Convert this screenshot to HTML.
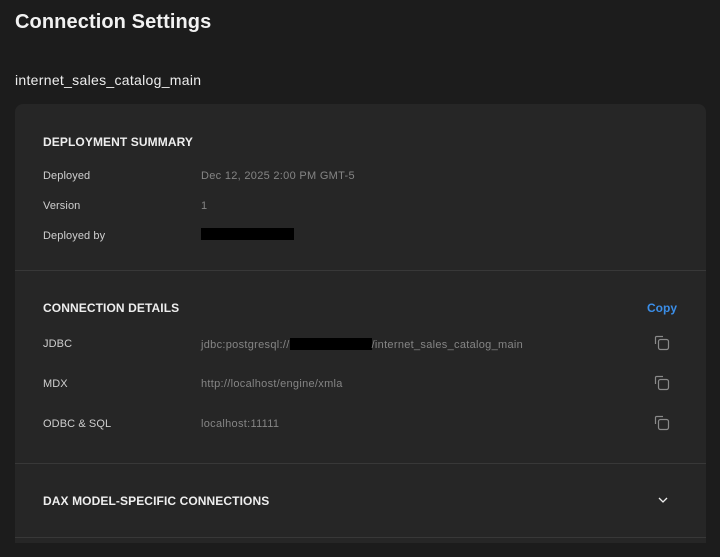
<!DOCTYPE html>
<html><head><style>
body{margin:0;background:#1c1c1c;width:720px;height:557px;overflow:hidden;font-family:"Liberation Sans",sans-serif;color:#ececec;position:relative}
.a{position:absolute;white-space:nowrap}
h1{position:absolute;left:15px;top:11px;margin:0;font-size:20px;font-weight:bold;color:#f2f2f2;letter-spacing:0.1px}
.card{position:absolute;left:15px;top:104px;width:691px;height:439px;background:#262626;border-radius:8px 8px 0 0}
.hd{font-size:12px;font-weight:bold;color:#eee;letter-spacing:0.1px}
.lb{font-size:11px;color:#cfcfcf;letter-spacing:0.1px}
.vl{font-size:11px;color:#858585;letter-spacing:0.3px}
.hr{position:absolute;left:15px;width:691px;height:1px;background:#383838}
.red{position:absolute;background:#000}
</style></head><body>
<h1>Connection Settings</h1>
<div class="a" style="left:15px;top:72px;font-size:14px;color:#eee;letter-spacing:0.3px">internet_sales_catalog_main</div>
<div class="card"></div>
<div class="a hd" style="left:43px;top:135px">DEPLOYMENT SUMMARY</div>
<div class="a lb" style="left:43px;top:170px">Deployed</div><div class="a vl" style="left:201px;top:170px">Dec 12, 2025 2:00 PM GMT-5</div>
<div class="a lb" style="left:43px;top:200px">Version</div><div class="a vl" style="left:201px;top:200px">1</div>
<div class="a lb" style="left:43px;top:230px">Deployed by</div><div class="red" style="left:201px;top:228px;width:93px;height:12px"></div>
<div class="hr" style="top:270px"></div>
<div class="a hd" style="left:43px;top:301px">CONNECTION DETAILS</div>
<div class="a" style="left:647px;top:301px;font-size:12px;font-weight:bold;color:#3b8ee8">Copy</div>
<div class="a lb" style="left:43px;top:338px">JDBC</div><div class="a vl" style="left:201px;top:338px">jdbc:postgresql://<span style="display:inline-block;width:82px;height:12px;background:#000;vertical-align:-2px"></span>/internet_sales_catalog_main</div>
<div class="a lb" style="left:43px;top:378px">MDX</div><div class="a vl" style="left:201px;top:378px">http://localhost/engine/xmla</div>
<div class="a lb" style="left:43px;top:418px">ODBC &amp; SQL</div><div class="a vl" style="left:201px;top:418px">localhost:11111</div>
<svg class="a" style="left:654px;top:335px" width="16" height="16"><g fill="none" stroke="#8a8a8a" stroke-width="1.2"><path d="M1.5 9V2.5a1 1 0 0 1 1-1H9"/><rect x="4.5" y="4.5" width="10" height="10" rx="2"/></g></svg>
<svg class="a" style="left:654px;top:375px" width="16" height="16"><g fill="none" stroke="#8a8a8a" stroke-width="1.2"><path d="M1.5 9V2.5a1 1 0 0 1 1-1H9"/><rect x="4.5" y="4.5" width="10" height="10" rx="2"/></g></svg>
<svg class="a" style="left:654px;top:415px" width="16" height="16"><g fill="none" stroke="#8a8a8a" stroke-width="1.2"><path d="M1.5 9V2.5a1 1 0 0 1 1-1H9"/><rect x="4.5" y="4.5" width="10" height="10" rx="2"/></g></svg>
<div class="hr" style="top:463px"></div>
<div class="a hd" style="left:43px;top:494px">DAX MODEL-SPECIFIC CONNECTIONS</div>
<svg class="a" style="left:658px;top:496px" width="10" height="8"><path d="M1 2l4 4 4-4" fill="none" stroke="#eee" stroke-width="1.3"/></svg>
<div class="hr" style="top:537px"></div>
</body></html>
